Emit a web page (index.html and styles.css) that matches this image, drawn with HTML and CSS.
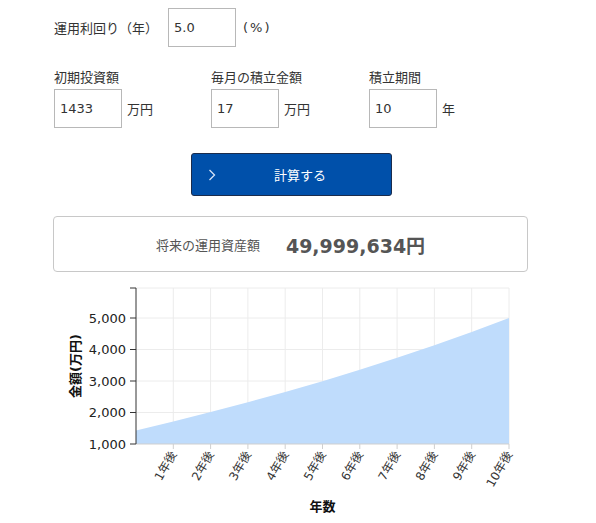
FILE: index.html
```html
<!DOCTYPE html>
<html lang="ja">
<head>
    <meta charset="UTF-8">
    <meta name="viewport" content="width=device-width, initial-scale=1.0">
    <title>積立シミュレーション</title>
    <link rel="stylesheet" href="styles.css">
</head>
<body>

    <div class="calc">
        <div class="rate-row">
            <label for="rate">運用利回り（年）</label>
            <input class="field" type="text" id="rate" value="5.0">
            <span class="unit-pct">(%)</span>
        </div>

        <div class="terms">
            <div class="term">
                <label for="initial">初期投資額</label>
                <div class="term-input">
                    <input class="field" type="text" id="initial" value="1433">
                    <span class="unit">万円</span>
                </div>
            </div>
            <div class="term">
                <label for="monthly">毎月の積立金額</label>
                <div class="term-input">
                    <input class="field" type="text" id="monthly" value="17">
                    <span class="unit">万円</span>
                </div>
            </div>
            <div class="term">
                <label for="years">積立期間</label>
                <div class="term-input">
                    <input class="field" type="text" id="years" value="10">
                    <span class="unit">年</span>
                </div>
            </div>
        </div>

        <button type="button" class="btn">
            <svg class="chev" width="8" height="12" viewBox="0 0 8 12"><path d="M1.5 1 L6.5 6 L1.5 11" fill="none" stroke="#d6e4f7" stroke-width="1.3"/></svg>
            <span>計算する</span>
        </button>

        <div class="result">
            <span class="result-label">将来の運用資産額</span>
            <span class="result-value">49,999,634円</span>
        </div>
    </div>

    <svg class="chart" width="596" height="245" viewBox="0 0 596 245">
        <!-- grid -->
        <g class="grid">
            <line x1="136" y1="10" x2="509" y2="10"/>
            <line x1="136" y1="40" x2="509" y2="40"/>
            <line x1="136" y1="71.5" x2="509" y2="71.5"/>
            <line x1="136" y1="103" x2="509" y2="103"/>
            <line x1="136" y1="134.5" x2="509" y2="134.5"/>
            <line x1="173.3" y1="10" x2="173.3" y2="166"/>
            <line x1="210.6" y1="10" x2="210.6" y2="166"/>
            <line x1="247.9" y1="10" x2="247.9" y2="166"/>
            <line x1="285.2" y1="10" x2="285.2" y2="166"/>
            <line x1="322.5" y1="10" x2="322.5" y2="166"/>
            <line x1="359.8" y1="10" x2="359.8" y2="166"/>
            <line x1="397.1" y1="10" x2="397.1" y2="166"/>
            <line x1="434.4" y1="10" x2="434.4" y2="166"/>
            <line x1="471.7" y1="10" x2="471.7" y2="166"/>
            <line x1="509" y1="10" x2="509" y2="166"/>
        </g>

        <!-- area -->
        <path class="area" d="M136 152.4 L173.3 143.5 L210.6 134.1 L247.9 124.3 L285.2 114 L322.5 103.2 L359.8 91.8 L397.1 79.8 L434.4 67.2 L471.7 53.9 L509 40 L509 166 L136 166 Z"/>

        <!-- x axis -->
        <g class="x-ticks">
            <line x1="136" y1="166" x2="509" y2="166"/>
            <line x1="173.3" y1="166" x2="173.3" y2="171"/>
            <line x1="210.6" y1="166" x2="210.6" y2="171"/>
            <line x1="247.9" y1="166" x2="247.9" y2="171"/>
            <line x1="285.2" y1="166" x2="285.2" y2="171"/>
            <line x1="322.5" y1="166" x2="322.5" y2="171"/>
            <line x1="359.8" y1="166" x2="359.8" y2="171"/>
            <line x1="397.1" y1="166" x2="397.1" y2="171"/>
            <line x1="434.4" y1="166" x2="434.4" y2="171"/>
            <line x1="471.7" y1="166" x2="471.7" y2="171"/>
            <line x1="509" y1="166" x2="509" y2="171"/>
        </g>
        <g class="x-labels">
            <text transform="translate(177,176) rotate(-60)">1年後</text>
            <text transform="translate(214.3,176) rotate(-60)">2年後</text>
            <text transform="translate(251.6,176) rotate(-60)">3年後</text>
            <text transform="translate(288.9,176) rotate(-60)">4年後</text>
            <text transform="translate(326.2,176) rotate(-60)">5年後</text>
            <text transform="translate(363.5,176) rotate(-60)">6年後</text>
            <text transform="translate(400.8,176) rotate(-60)">7年後</text>
            <text transform="translate(438.1,176) rotate(-60)">8年後</text>
            <text transform="translate(475.4,176) rotate(-60)">9年後</text>
            <text transform="translate(512.7,176) rotate(-60)">10年後</text>
        </g>

        <!-- y axis -->
        <path class="y-axis" d="M130 10 H136 V166 H130 M130 40 H136 M130 71.5 H136 M130 103 H136 M130 134.5 H136"/>
        <g class="y-labels">
            <text x="126" y="44.5">5,000</text>
            <text x="126" y="76">4,000</text>
            <text x="126" y="107.5">3,000</text>
            <text x="126" y="139">2,000</text>
            <text x="126" y="170.5">1,000</text>
        </g>

        <text class="axis-title" transform="translate(80,88) rotate(-90)">金額(万円)</text>
        <text class="axis-title" x="322.5" y="233">年数</text>
    </svg>

</body>
</html>
```

FILE: styles.css
```css
body {
    margin: 0;
    font-family: "DejaVu Sans", "Noto Sans CJK JP", sans-serif;
    font-size: 13px;
    color: #333;
}
.calc {
    width: 474px;
    padding: 8px 0 0 54px;
}
.rate-row {
    display: flex;
    align-items: center;
}
.rate-row label {
    margin-right: 10px;
}
.unit-pct {
    margin-left: 7px;
    letter-spacing: 2px;
}
.field {
    width: 68px;
    height: 39px;
    box-sizing: border-box;
    border: 1px solid #b8b8b8;
    padding: 0 5px;
    font-family: inherit;
    font-size: 13px;
    color: #333;
    margin: 0;
}
.terms {
    display: grid;
    grid-template-columns: 157px 158px auto;
    margin-top: 22px;
}
.term label {
    display: block;
    line-height: 18px;
    margin-bottom: 2px;
}
.term-input {
    display: flex;
    align-items: center;
}
.unit {
    margin-left: 5px;
}
.btn {
    display: flex;
    align-items: center;
    width: 201px;
    height: 43px;
    margin: 25px auto 0;
    padding: 0 6px 0 16px;
    background-color: #0050aa;
    border: 1px solid #1b2c4c;
    border-radius: 3px;
    color: #fff;
    font-family: inherit;
    font-size: 13px;
    cursor: pointer;
}
.btn span {
    flex: 1;
    text-align: center;
}
.result {
    display: flex;
    align-items: center;
    justify-content: center;
    gap: 26px;
    height: 56px;
    box-sizing: border-box;
    margin-top: 20px;
    margin-left: -1px;
    border: 1px solid #c8c8c8;
    border-radius: 4px;
    color: #555;
}
.result-value {
    font-size: 19px;
    font-weight: bold;
}
.chart {
    display: block;
    margin-top: 6px;
}
.grid line {
    stroke: #ececec;
    stroke-width: 1;
}
.area {
    fill: #bfdcfc;
}
.x-ticks line {
    stroke: #cfcfcf;
    stroke-width: 1;
}
.x-labels text {
    font-size: 12px;
    fill: #333;
    text-anchor: end;
}
.y-axis {
    fill: none;
    stroke: #333;
    stroke-width: 1;
}
.y-labels text {
    font-size: 13px;
    fill: #222;
    text-anchor: end;
}
.axis-title {
    font-size: 13px;
    font-weight: bold;
    fill: #111;
    text-anchor: middle;
}
```
